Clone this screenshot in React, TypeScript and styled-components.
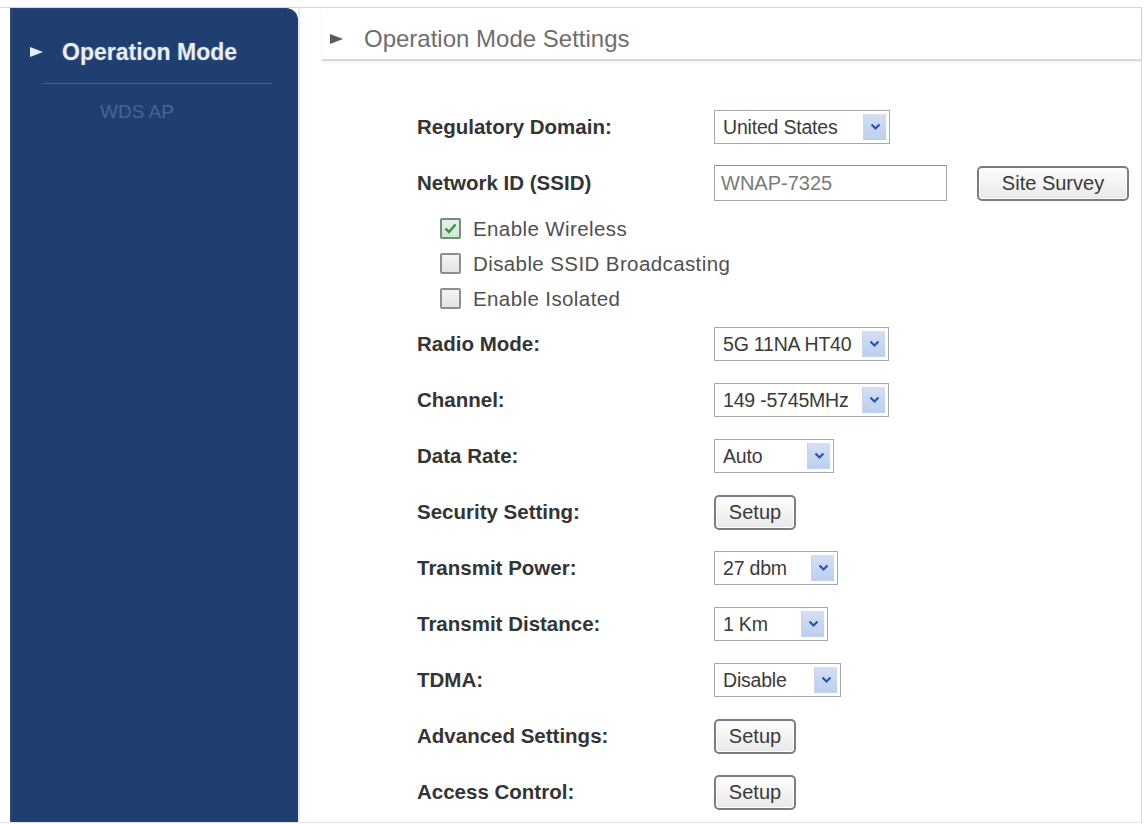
import styled, { createGlobalStyle } from "styled-components";

const GlobalStyle = createGlobalStyle`
  html, body {
    margin: 0;
    padding: 0;
    background: #ffffff;
  }
  body {
    font-family: "Liberation Sans", Arial, sans-serif;
  }
`;

const Frame = styled.div`
  box-sizing: border-box;
  margin-top: 7px;
  width: 1142px;
  height: 816px;
  display: flex;
  padding-left: 10px;
  border-top: 1px solid #d6d6d6;
  border-right: 1px solid #d6d6d6;
  border-bottom: 1px solid #e4e4e4;
`;

const Sidebar = styled.nav`
  width: 288px;
  flex-shrink: 0;
  background: #203f71;
  border-top-right-radius: 12px;
  box-shadow: inset 2px 0 3px rgba(255, 255, 255, 0.06);
`;

const SideActive = styled.div`
  display: flex;
  align-items: center;
  gap: 19px;
  padding: 30px 0 0 20px;
  height: 28px;
  font-size: 23px;
  font-weight: bold;
  color: #e8eef8;
  text-shadow: 0 0 2px rgba(255, 255, 255, 0.25);
`;

const WhiteArrow = styled.span`
  width: 0;
  height: 0;
  border-left: 13px solid #e8eef8;
  border-top: 5px solid transparent;
  border-bottom: 5px solid transparent;
`;

const SideDivider = styled.div`
  height: 1px;
  margin: 17px 26px 0 33px;
  background: #3f6198;
`;

const SideLink = styled.div`
  padding: 17px 0 0 90px;
  line-height: 22px;
  font-size: 19px;
  color: #46659a;
`;

const Main = styled.main`
  flex: 1;
  border-left: 2px solid #e3ebf7;
`;

const Header = styled.div`
  display: flex;
  align-items: center;
  gap: 21px;
  margin-left: 22px;
  padding: 19px 0 8px 8px;
  line-height: 24px;
  font-size: 24px;
  color: #6e6e6e;
  border-bottom: 2px solid #d8d8d8;
  box-shadow: 0 1px 2px rgba(0, 0, 0, 0.08);
`;

const GreyArrow = styled.span`
  width: 0;
  height: 0;
  border-left: 13px solid #5a5a5a;
  border-top: 5px solid transparent;
  border-bottom: 5px solid transparent;
`;

const Form = styled.div`
  padding: 38px 0 0 117px;
`;

const Row = styled.div`
  display: grid;
  grid-template-columns: 297px auto;
  align-items: center;
  height: 56px;
`;

const Label = styled.span`
  font-size: 20.5px;
  font-weight: bold;
  color: #343434;
`;

const Controls = styled.div`
  display: flex;
  align-items: center;
  gap: 30px;
`;

const SelectBox = styled.div<{ $width: number }>`
  box-sizing: border-box;
  width: ${(p) => p.$width}px;
  height: 34px;
  display: flex;
  align-items: center;
  justify-content: space-between;
  padding: 0 3px 0 8px;
  border: 1px solid #a4a9b0;
  background: #ffffff;
  font-size: 19.5px;
  letter-spacing: -0.2px;
  color: #3a3a3a;
  white-space: nowrap;
`;

const ArrowBox = styled.span`
  width: 22px;
  height: 26px;
  display: flex;
  align-items: center;
  justify-content: center;
  background: linear-gradient(#d3e0f5, #bccfee);
  border-left: 1px solid #c7d4ea;
`;

const TextInput = styled.div`
  box-sizing: border-box;
  width: 233px;
  height: 36px;
  display: flex;
  align-items: center;
  padding-left: 6px;
  border: 1px solid #a6a6a6;
  border-top-color: #8e8e8e;
  font-size: 20px;
  color: #7a7a7a;
`;

const Button = styled.button<{ $width: number }>`
  box-sizing: border-box;
  width: ${(p) => p.$width}px;
  height: 35px;
  padding: 0;
  font-family: inherit;
  font-size: 20px;
  color: #3a3a3a;
  background: linear-gradient(#fdfdfd, #e9e9e9);
  border: 2px solid #7d7d7d;
  border-radius: 5px;
  box-shadow: inset 0 0 0 1px #ffffff;
`;

const CheckGroup = styled.div`
  padding-left: 23px;
`;

const CheckRow = styled.label`
  display: flex;
  align-items: center;
  gap: 12px;
  height: 35px;
  font-size: 20.5px;
  letter-spacing: 0.4px;
  color: #505050;
`;

const CheckBox = styled.span<{ $checked: boolean }>`
  box-sizing: border-box;
  width: 21px;
  height: 21px;
  display: flex;
  align-items: center;
  justify-content: center;
  border: 2px solid ${(p) => (p.$checked ? "#6f8f7c" : "#8a8f93")};
  border-radius: 2px;
  background: ${(p) =>
    p.$checked
      ? "linear-gradient(#e6f3e6, #cfe6d2)"
      : "linear-gradient(#f4f4f4, #e3e3e3)"};
`;

function Chevron() {
  return (
    <svg width="11" height="8" viewBox="0 0 11 8">
      <path d="M1.5 1.5 L5.5 5.5 L9.5 1.5" fill="none" stroke="#2c55a6" strokeWidth="2.2" />
    </svg>
  );
}

function Tick() {
  return (
    <svg width="13" height="11" viewBox="0 0 13 11">
      <path d="M1.5 5.5 L5 9 L11.5 1.5" fill="none" stroke="#3f8c45" strokeWidth="2.4" />
    </svg>
  );
}

function Select({ value, width }: { value: string; width: number }) {
  return (
    <SelectBox $width={width}>
      <span>{value}</span>
      <ArrowBox>
        <Chevron />
      </ArrowBox>
    </SelectBox>
  );
}

const checks = [
  { label: "Enable Wireless", checked: true },
  { label: "Disable SSID Broadcasting", checked: false },
  { label: "Enable Isolated", checked: false },
];

const lowerRows: { label: string; select?: string; width?: number }[] = [
  { label: "Radio Mode:", select: "5G 11NA HT40", width: 175 },
  { label: "Channel:", select: "149 -5745MHz", width: 175 },
  { label: "Data Rate:", select: "Auto", width: 120 },
  { label: "Security Setting:" },
  { label: "Transmit Power:", select: "27 dbm", width: 124 },
  { label: "Transmit Distance:", select: "1 Km", width: 114 },
  { label: "TDMA:", select: "Disable", width: 127 },
  { label: "Advanced Settings:" },
  { label: "Access Control:" },
];

export default function App() {
  return (
    <>
      <GlobalStyle />
      <Frame>
        <Sidebar>
          <SideActive>
            <WhiteArrow />
            Operation Mode
          </SideActive>
          <SideDivider />
          <SideLink>WDS AP</SideLink>
        </Sidebar>
        <Main>
          <Header>
            <GreyArrow />
            Operation Mode Settings
          </Header>
          <Form>
            <Row>
              <Label>Regulatory Domain:</Label>
              <Select value="United States" width={176} />
            </Row>
            <Row>
              <Label>Network ID (SSID)</Label>
              <Controls>
                <TextInput>WNAP-7325</TextInput>
                <Button $width={152}>Site Survey</Button>
              </Controls>
            </Row>
            <CheckGroup>
              {checks.map((c) => (
                <CheckRow key={c.label}>
                  <CheckBox $checked={c.checked}>{c.checked && <Tick />}</CheckBox>
                  {c.label}
                </CheckRow>
              ))}
            </CheckGroup>
            {lowerRows.map((r) => (
              <Row key={r.label}>
                <Label>{r.label}</Label>
                <Controls>
                  {r.select ? (
                    <Select value={r.select} width={r.width ?? 120} />
                  ) : (
                    <Button $width={82}>Setup</Button>
                  )}
                </Controls>
              </Row>
            ))}
          </Form>
        </Main>
      </Frame>
    </>
  );
}
